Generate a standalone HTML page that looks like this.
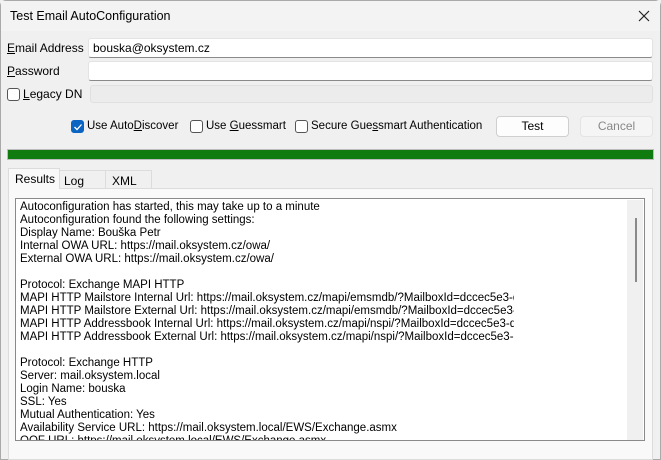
<!DOCTYPE html>
<html><head><style>
*{box-sizing:border-box;margin:0;padding:0}
body{width:661px;height:460px;overflow:hidden;background:#f0f0f0;font-family:"Liberation Sans",sans-serif;font-size:12px;color:#000;position:relative}
.abs{position:absolute}
.win{left:0;top:0;width:661px;height:460px;border:1px solid #a9a9a9;border-radius:6px 6px 0 0}
.title{left:1px;top:1px;width:659px;height:30px;background:#f3f3f3}
.inp{background:#fff;border:1px solid #e3e3e3;border-bottom:1px solid #8a8a8a;border-radius:3px}
.cb{width:13px;height:13px;border:1px solid #555;border-radius:3px;background:#fff}
.btn{border:1px solid #cfcfcf;border-radius:4px;background:#fdfdfd;text-align:center;line-height:18px}
.sm{font-size:11.5px}
u{text-decoration:underline}
</style></head><body>
<div class="abs win"></div>
<div class="abs title"></div>
<div class="abs" style="left:10px;top:9px;font-size:12.5px">Test Email AutoConfiguration</div>
<svg class="abs" style="left:638px;top:10px" width="12" height="12"><path d="M1 1L11 11M11 1L1 11" stroke="#222" stroke-width="1.2"/></svg>

<div class="abs" style="left:7px;top:41px"><u>E</u>mail Address</div>
<div class="abs inp" style="left:88px;top:38px;width:565px;height:20px"></div>
<div class="abs" style="left:93px;top:41px">bouska@oksystem.cz</div>
<div class="abs" style="left:7px;top:64px"><u>P</u>assword</div>
<div class="abs inp" style="left:88px;top:61px;width:565px;height:20px"></div>
<div class="abs cb" style="left:7px;top:88px"></div>
<div class="abs" style="left:23px;top:87px"><u>L</u>egacy DN</div>
<div class="abs" style="left:90px;top:85px;width:563px;height:18px;border:1px solid #e0e0e0;background:#ececec;border-radius:3px"></div>

<div class="abs cb" style="left:71px;top:120px;background:#0a64c2;border-color:#0a64c2"></div>
<svg class="abs" style="left:73px;top:122px" width="10" height="10"><path d="M1.5 5L4 7.5L8.5 2.5" stroke="#fff" stroke-width="1.3" fill="none"/></svg>
<div class="abs sm" style="left:87px;top:120px">Use Auto<u>D</u>iscover</div>
<div class="abs cb" style="left:190px;top:120px"></div>
<div class="abs sm" style="left:206px;top:120px">Use <u>G</u>uessmart</div>
<div class="abs cb" style="left:295px;top:120px"></div>
<div class="abs sm" style="left:311px;top:120px">Secure Gue<u>s</u>smart Authentication</div>
<div class="abs btn" style="left:496px;top:116px;width:73px;height:21px">Test</div>
<div class="abs btn" style="left:580px;top:116px;width:73px;height:21px;color:#888;background:#f5f5f5;border-color:#e4e4e4">Cancel</div>

<div class="abs" style="left:7px;top:149px;width:647px;height:11px;background:#107c10;border:1px solid #bcbcbc"></div>

<div class="abs" style="left:8px;top:188px;width:645px;height:272px;background:#f9f9f9;border:1px solid #dcdcdc"></div>
<div class="abs" style="left:8px;top:168px;width:52px;height:21px;background:#f9f9f9;border:1px solid #dcdcdc;border-bottom:none"></div>
<div class="abs" style="left:15px;top:172px">Results</div>
<div class="abs" style="left:59px;top:170px;width:47px;height:18px;border:1px solid #dcdcdc;border-bottom:none"></div>
<div class="abs" style="left:64px;top:174px">Log</div>
<div class="abs" style="left:105px;top:170px;width:47px;height:18px;border:1px solid #dcdcdc;border-bottom:none"></div>
<div class="abs" style="left:112px;top:174px">XML</div>

<div class="abs" style="left:15px;top:198px;width:630px;height:243px;background:#fff;border:1px solid #8a8a8a;overflow:hidden">
<div class="abs" style="left:611px;top:1px;width:16px;height:242px;background:#f0f0f0"></div>
<div class="abs" style="left:619px;top:19px;width:2px;height:64px;background:#8a8a8a"></div>
<div class="abs" style="left:4px;top:2px;width:494px;overflow:hidden;white-space:pre;line-height:13px;font-size:11.5px">Autoconfiguration has started, this may take up to a minute
Autoconfiguration found the following settings:
Display Name: Bouška Petr
Internal OWA URL: https://mail.oksystem.cz/owa/
External OWA URL: https://mail.oksystem.cz/owa/

Protocol: Exchange MAPI HTTP
MAPI HTTP Mailstore Internal Url: https://mail.oksystem.cz/mapi/emsmdb/?MailboxId=dccec5e3-d
MAPI HTTP Mailstore External Url: https://mail.oksystem.cz/mapi/emsmdb/?MailboxId=dccec5e3-d
MAPI HTTP Addressbook Internal Url: https://mail.oksystem.cz/mapi/nspi/?MailboxId=dccec5e3-d
MAPI HTTP Addressbook External Url: https://mail.oksystem.cz/mapi/nspi/?MailboxId=dccec5e3-d

Protocol: Exchange HTTP
Server: mail.oksystem.local
Login Name: bouska
SSL: Yes
Mutual Authentication: Yes
Availability Service URL: https://mail.oksystem.local/EWS/Exchange.asmx
OOF URL: https://mail.oksystem.local/EWS/Exchange.asmx</div>
</div>
</body></html>
